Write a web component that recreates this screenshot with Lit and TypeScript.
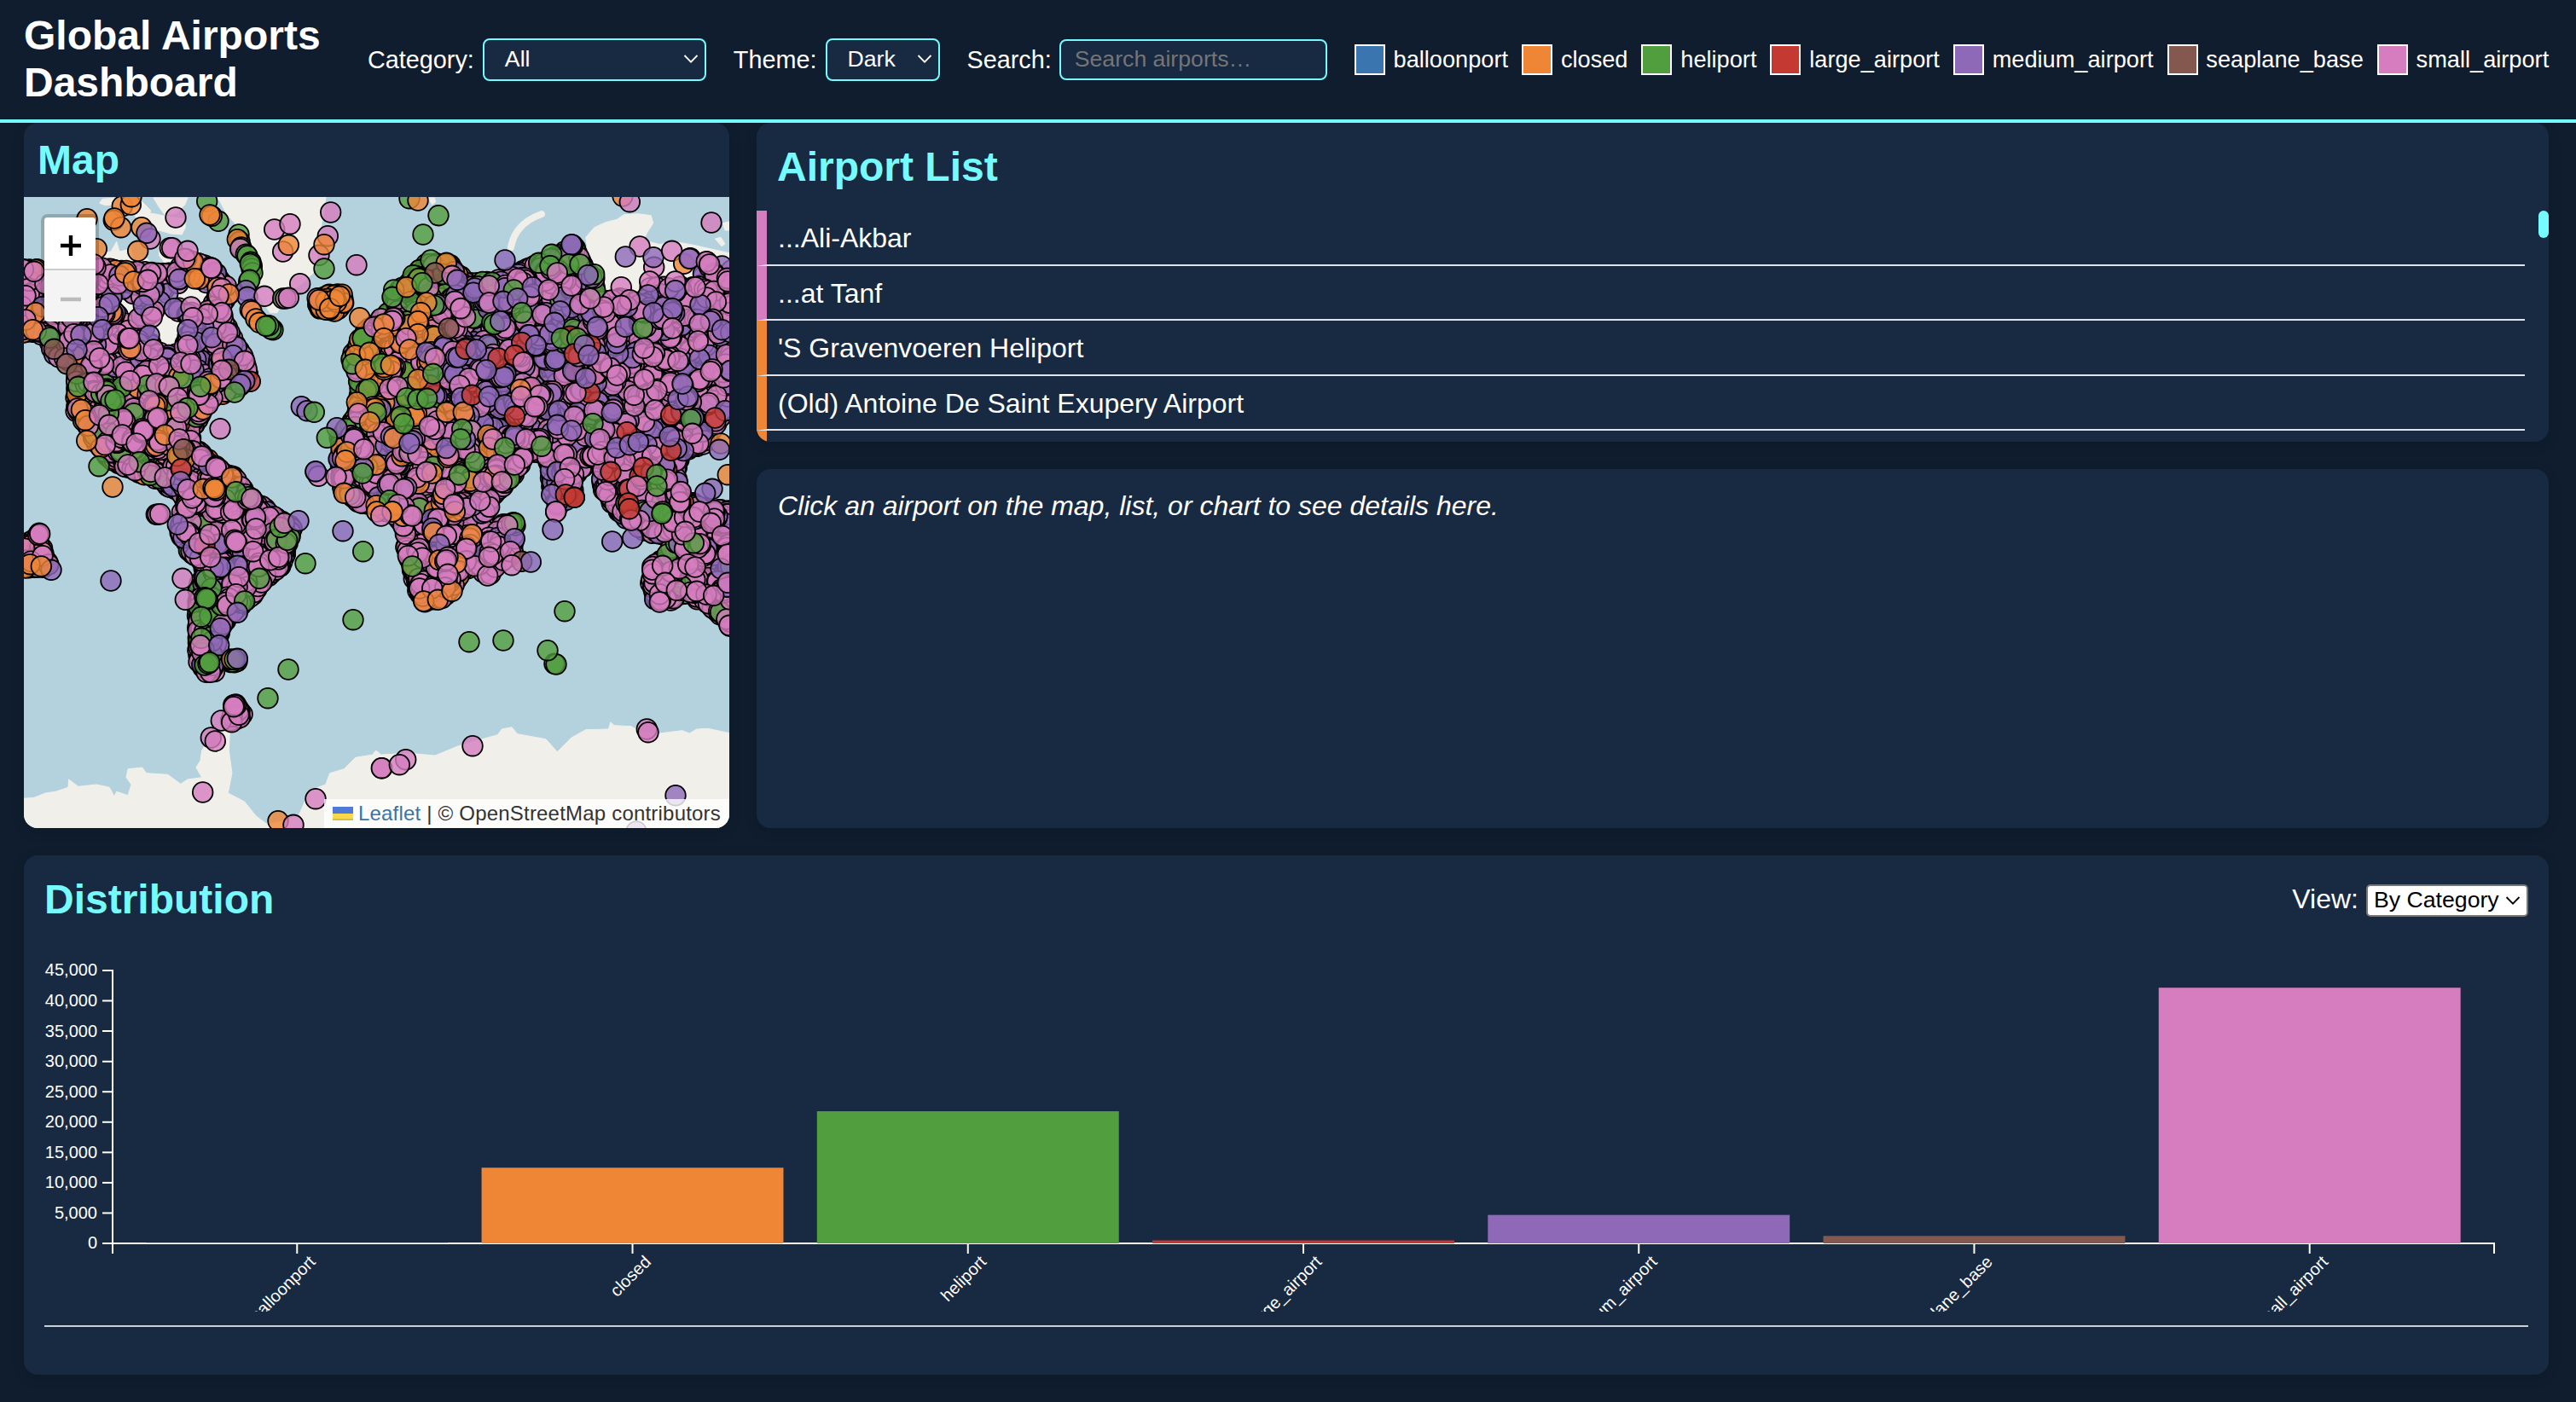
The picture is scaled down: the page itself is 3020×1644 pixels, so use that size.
import { LitElement, html, svg, css } from "lit";
import { customElement, property } from "lit/decorators.js";

type Kind = "u" | "o" | "g" | "r" | "v" | "b" | "p";

const COLORS: Record<Kind, string> = {
  u: "#3b75af",
  o: "#ef8636",
  g: "#519e3e",
  r: "#c43a32",
  v: "#8d69b8",
  b: "#84584e",
  p: "#d57dbe",
};

const CATEGORIES: { name: string; kind: Kind; count: number }[] = [
  { name: "balloonport", kind: "u", count: 50 },
  { name: "closed", kind: "o", count: 12480 },
  { name: "heliport", kind: "g", count: 21790 },
  { name: "large_airport", kind: "r", count: 490 },
  { name: "medium_airport", kind: "v", count: 4690 },
  { name: "seaplane_base", kind: "b", count: 1230 },
  { name: "small_airport", kind: "p", count: 42160 },
];

const AIRPORTS: { name: string; kind: Kind }[] = [
  { name: "...Ali-Akbar", kind: "p" },
  { name: "...at Tanf", kind: "p" },
  { name: "'S Gravenvoeren Heliport", kind: "o" },
  { name: "(Old) Antoine De Saint Exupery Airport", kind: "o" },
  { name: "", kind: "o" },
];

/* ---------- map data: four quadrants, three units per pixel ---------- */

type Point = [number, number];
type Marker = { x: number; y: number; k: Kind };

const NW: Point = [20, 220];
const NE: Point = [440, 220];
const SW: Point = [20, 590];
const SE: Point = [440, 590];

const points = (origin: Point, list: string): Point[] =>
  list
    .trim()
    .split(/\s+/)
    .map((pair) => {
      const [x, y] = pair.split(",").map(Number);
      return [origin[0] + x / 3, origin[1] + y / 3] as Point;
    });

const toPath = (ring: Point[]) => "M" + ring.map((p) => p[0].toFixed(1) + " " + p[1].toFixed(1)).join("L") + "Z";

const LAND: string[] = [
  toPath(points(NW, "690,20 1088,20 1075,110 1060,180 1052,290 1000,340 950,370 915,440 890,440 850,380 820,300 790,200 770,130 735,90 715,50")),
  toPath(points(NW, "590,110 592,140 580,165 540,162 500,150 470,170 450,120 470,90 520,100")),
  toPath(points(NW, "300,40 350,36 340,60 310,62 290,55")),
  toPath(points(NW, "480,36 600,36 590,60 560,90 520,96 500,70")),
  toPath(points(NW, "400,60 440,50 470,80 460,120 420,110")),
  toPath(points(NW, "290,235 330,225 350,190 360,225 400,215 410,260 460,250 470,285 400,290 380,270 290,270")),
  toPath(points(NW, "500,200 560,210 640,220 640,300 540,290 500,240")),
  toPath(points(NW, "620,400 655,370 665,420 630,430")),
  toPath(points(NW, "24,300 740,330 760,560 800,640 600,760 120,600 24,500")),
  toPath(points(NE, "740,175 770,140 810,122 850,112 875,95 925,92 970,98 977,125 955,160 945,185 1000,200 1050,190 1110,200 1245,230 1245,700 760,700 760,300")),
  toPath(points(NE, "1195,180 1215,175 1230,198 1218,206")),
  toPath(points(NE, "1222,125 1245,120 1245,150 1230,150")),
  toPath(points(NE, "185,36 208,36 212,50 200,60")),
  toPath(
    points(
      SW,
      "10,1040 60,1036 100,1020 135,1015 180,1000 182,972 215,997 280,990 325,1000 342,1032 350,1015 390,1028 402,990 384,965 390,935 440,930 455,950 530,955 575,988 600,972 650,965 630,930 645,905 650,870 665,845 690,870 720,800 748,810 745,870 756,950 742,1020 800,1050 840,1100 880,1130 930,1120 990,1100 1030,1010 1085,990 1100,950 1150,935 1190,895 1250,885 1262,870 1280,885 1380,880 1470,888 1550,855 1600,840 1690,815 1705,795 1740,788 1760,812 1860,830 1900,875 1950,825 2000,797 2080,795 2088,770 2100,782 2160,785 2200,808 2260,810 2340,800 2365,810 2390,795 2430,793 2520,812 2520,1160 10,1160",
    ),
  ),
];

type Region = { ring: Point[]; mix: string; gap?: number; clump?: number; holes?: [number, number, number][] };

const REGIONS: Region[] = [
  {
    ring: points(NW, "20,290 70,290 120,340 280,280 380,295 470,300 560,300 600,250 680,285 735,345 745,375 710,430 745,510 795,600 815,655 780,700 720,725 640,640 250,625 130,590 110,520 60,505 20,510"),
    mix: "pppppppppvvvvvpo",
    gap: 75,
    clump: 2,
    holes: [
      [198, 384, 25],
      [226, 344, 20],
      [150, 364, 15],
    ],
  },
  { ring: points(NW, "208,665 400,645 560,660 680,690 695,730 635,800 610,850 600,950 420,930 290,890 248,840 212,780"), mix: "pppppppgooggp", clump: 4 },
  { ring: points(NW, "265,880 420,880 640,930 700,990 760,1020 830,1110 610,1120 570,1065 490,1020 430,1000 335,960"), mix: "pppppvogp", clump: 3 },
  { ring: points(NW, "1060,390 1100,375 1145,380 1150,410 1110,435 1065,425"), mix: "oooop", clump: 3 },
  {
    ring: points(SW, "600,0 800,-30 870,20 920,60 965,85 950,130 930,190 920,225 855,280 830,320 795,350 730,410 705,480 690,540 690,590 665,592 640,560 640,490 636,370 655,300 662,215 615,175 575,100 580,60"),
    mix: "pppppppppvvg",
    clump: 3,
  },
  { ring: points(SW, "640,300 665,250 690,320 680,430 685,540 690,575 665,570 640,500"), mix: "ggggggpv", clump: 3 },
  { ring: points(SW, "900,50 965,90 945,150 925,225 860,260 850,220 900,160"), mix: "gggpp", clump: 3 },
  { ring: points(SW, "20,150 60,130 90,170 110,220 60,225 20,230"), mix: "pvpo", clump: 2 },
  { ring: points(SW, "750,552 770,560 755,562"), mix: "vog" },
  { ring: points(SW, "765,710 790,740 780,755 755,765"), mix: "p" },
  { ring: points(NE, "-40,510 0,480 50,440 120,420 230,420 240,560 160,640 100,700 -50,690 -80,600"), mix: "oooogpppg", clump: 3 },
  { ring: points(NE, "65,395 85,360 125,335 160,290 190,265 260,275 300,315 320,420 200,440 80,430"), mix: "gggoopppv", clump: 3 },
  { ring: points(NE, "310,340 460,325 540,285 620,250 700,210 735,290 770,320 770,480 640,560 320,560 240,430"), mix: "vvvvpppgp", clump: 2 },
  { ring: points(NE, "160,560 640,550 780,480 780,960 560,930 330,800 160,760"), mix: "vvvvpppvprp", clump: 2 },
  {
    ring: points(NE, "760,400 860,390 930,410 1060,390 1150,340 1180,390 1250,400 1250,760 1200,830 1150,900 1060,940 780,960"),
    mix: "pppppvvvvpp",
    gap: 60,
    clump: 2,
  },
  { ring: points(NE, "1170,265 1250,290 1250,420 1200,400 1160,350 950,390 965,350 1130,345"), mix: "ppvp", gap: 170 },
  { ring: points(NE, "800,930 1070,940 1050,1000 1080,1110 1160,1130 1240,1140 1240,1180 1000,1210 920,1170 850,1130 800,1050"), mix: "vvppprpg", clump: 3 },
  { ring: points(NE, "605,950 760,950 700,1010 690,1080 640,1120 627,1060"), mix: "vvppp", clump: 3 },
  { ring: points(NE, "-50,690 100,690 300,790 320,900 -110,1000 -125,880 -60,800"), mix: "googppv", clump: 3 },
  { ring: points(NE, "-125,950 -80,880 100,850 330,800 540,900 510,970 465,1030 400,1100 200,1140 100,1160 0,1120 -60,1110 -110,1060"), mix: "pppppgov", clump: 3 },
  { ring: points(SE, "50,20 180,0 400,10 370,80 400,120 400,190 350,220 300,235 275,290 230,335 170,345 145,290 130,220 112,150 110,90"), mix: "ppppppovp", clump: 3 },
  { ring: points(SE, "450,70 485,75 480,180 430,215 400,248 375,240 360,190"), mix: "ppppv", clump: 3 },
  { ring: points(SE, "975,220 1010,200 1070,120 1130,40 1250,30 1250,430 1215,390 1165,350 1110,310 1040,335 985,340 972,280"), mix: "ppppppppppvg", clump: 3 },
  { ring: points(SE, "850,0 1120,0 1060,90 1000,110 940,90 885,50"), mix: "ppppv", clump: 3 },
];

const CLUSTERS: [Point, string][] = [
  [
    NW,
    `246,110o 280,215o 370,65o 400,60o 402,32o 340,115o 365,140o 342,108o 558,105p 438,140o 468,180p 456,160v 425,223o 538,212p 545,212p 590,250p 600,223p
     668,48g 708,118g 685,100o 678,96o 1103,87p 905,147p 960,128p 935,225p 955,202o 1093,170p 1062,238p 1080,200o 1080,285g 1194,272p 995,338p
     780,165g 783,190b 775,182o 788,210g 785,215p 805,235g 810,240g 822,262g 826,275g 825,285g 828,300g 820,268g 815,330g 818,325g 805,362v 810,385v 870,382p 935,390g 945,390p 955,388p
     820,430p 825,435o 840,462o 852,475o 900,500g 893,497g 885,485g 875,487g 1062,395o 1100,425o 1135,382o 1205,458o
     60,295p 30,380p 65,440o 30,465p 55,500o 285,340p 270,270p 360,310v 355,338p 380,300o 410,330o 470,300p 460,325p 570,322v 640,322o 625,320o 685,283p 683,283p 720,355p 745,375o 708,380p 720,440p 300,420p 325,408v 285,455v 445,415v 475,455p 553,425v 612,420p 670,445p 618,458p
     225,518v 300,500v 355,515p 390,530p 395,530p 465,520v 600,500v 685,527v 740,510p 600,555p 480,570p 270,575p 290,600p 210,570v 720,600p 760,590v 575,615p 612,620p 800,610p 745,640b 720,643p
     820,682r 800,680v 786,692v 765,720g 115,528g 130,568b 175,620b 210,655b 215,700g 270,685p
     397,680p 490,690p 535,700p 565,740p 465,750p 330,750g 345,747g 240,818o 290,800p 323,835p 370,870p 440,848p 438,862p 446,858p 440,855p 445,855p 420,900p 640,730p 680,690o 645,700g 600,775g 575,790p 495,810p 520,870o 570,885p 585,920b 310,905p 245,890o 288,980g 336,1053o 430,965g 390,975p 470,1000p 520,1020p 577,990r 650,945p 714,848p 575,1035v 700,980p 710,990p 700,985p 755,1020o 600,1062p 655,1060o 700,1065o 690,1055o 695,1060o 770,1070g 825,1095p
     1000,770v 1020,785v 1045,790g 1125,845v 1050,1000v 1060,1015p 1050,998v 1090,880g 1195,755o 1200,795p 1240,825o 1185,885p 1160,930o 1155,960o 1220,920p 1215,1005g 1122,1018p 1150,1075o 1190,1090p
     1215,530g 1255,490p 1190,590o 1240,580o 1180,620g 1225,640o`,
  ],
  [
    NE,
    `120,38g 150,45o 222,98g 168,165g 870,30o 895,50p 1182,123p 695,203g 692,201v 690,200v 456,255v 575,265g 620,235g 615,275g 680,270g 720,270g 770,305g 748,308v 930,207p 880,243v 980,280p 978,245v 1043,223p 1085,268o 1108,248p 1105,250v 965,330p 865,350p 960,378v 1055,330p 1055,362v 1165,260p 1175,270p 1125,350p 895,395p 865,415p
     195,255g 250,265o 210,300b 270,310p 288,325v 65,360g 60,385g 110,350o 165,335g 180,405o 160,440o 150,470o 280,400p 300,425p 400,345p 400,405p 500,320p 487,360g 553,350v 450,400v 500,390v 660,385v 650,435v 630,475v 515,440g 440,470v 640,300p 610,360p 690,345p 720,410p 803,420p 755,390p
     30,480o 30,530o 150,515o 108,530p 120,570o 20,620g 55,625o 258,495b 180,580v 210,600p 318,568r 355,570v 470,570p 432,600r 390,642v 515,545r 565,555v 490,590r 520,615p 655,530g 710,530g 700,585r 735,555v 750,590v 780,490v 850,525p 880,490v 940,495g 978,440v 1045,425v 1045,495p 1140,480p 1220,500v 1240,330p 1135,540p 1065,610p 945,565p 850,660p 910,730p 945,675p
     150,675o 203,655g 78,700p 110,740g 150,745g 182,742g 90,805g 100,830g 250,790o 310,790o 305,850g 300,885g 210,850p 190,840p 340,730r 400,735v 455,765v 510,710o 513,735p 570,770p 560,770p 645,785v 700,805p 755,722r 705,722p 740,670v 490,805r 640,835v 765,830g 690,855v 790,885p 530,885p 585,910g 400,915o 413,885p 455,915g 885,860r 850,915v 895,905v 925,895v 1040,800r 1065,745v 1100,735v 1080,690v 1195,810r 1110,815g 1115,865p 1040,925r 1035,875v 1215,900o 1210,922v 1240,1010o
     350,965g 150,940p 120,900v 430,975p 490,975p 200,1005o 180,1000p 295,1010g 380,1035p 445,1035p 110,1055v 100,1060p 50,1100g 80,1115p 60,1140o 275,1110p 245,1060p 640,1000v 685,985p 665,1025p 620,1080v 700,1090r 670,1080r 828,1000r 943,985r 990,1010g 990,1050g 920,1050p 1075,1070p 890,1110r 1010,1140g 1185,1060v 1160,1075v 635,1140p`,
  ],
  [
    SW,
    `490,40p 495,40p 503,38p 78,106p 74,112p 80,108p 90,185p 45,215o 120,235v 85,222o 330,273v 582,265p 592,340p 565,75v 620,160v 660,150r 640,140p 678,110p 755,95p 765,130p 772,138p 770,135p 840,90p 830,170p 775,220v 715,225v 680,190p 780,260p 890,200p 920,190p 852,265g 950,130g 925,85g 940,70p 990,62v 1146,98v 1217,170g 1014,212g 1182,410g 954,585g 882,686g
     665,270g 660,332g 670,338g 665,335g 648,400g 648,475g 645,500p 740,360p 770,320p 800,345g 775,385v 715,440v 710,500v 680,595p 660,570g 672,565g 677,560g 755,550o 765,550g 775,547v 718,765p 755,770p 780,745p 770,712p 765,710p 762,716p 682,825p 697,837p 653,1017p 1050,1040p 1283,932p 918,1118o 972,1132p 1265,30o`,
  ],
  [
    SE,
    `60,30o 130,45p 20,45p 280,30o 275,5p 340,110o 250,115p 225,145v 320,160p 115,185p 130,222g 225,200o 285,210o 255,190p 245,205p 250,200p 155,300p 200,300p 170,345o 220,340o 270,310o 255,250p 395,255p 415,180p 407,135p 485,68g 492,78g 480,72g 490,70g 465,78p 490,125v 475,170p 515,205b 547,207v 480,218p 400,190p 635,30p 624,93v 833,135v 905,123v 900,60p 700,-20r 893,20r 1008,37g
     1120,50p 1140,30p 1180,70p 1220,115p 1120,140g 1090,100p 1010,220p 1100,215p 1125,225p 1215,230v 1000,320p 1020,280p 1060,307p 1130,310p 1190,325p 1240,280p 1240,180p 1245,430p 1000,348p 666,380g 330,488g 450,483g 630,565g 636,567g 606,518g 107,902p 22,932p 85,920p 342,854p 955,795p 960,806p 1056,1028v 918,1155v`,
  ],
];

function random(seed: number) {
  return () => {
    seed = (seed + 0x6d2b79f5) | 0;
    let t = Math.imul(seed ^ (seed >>> 15), 1 | seed);
    t = (t + Math.imul(t ^ (t >>> 7), 61 | t)) ^ t;
    return ((t ^ (t >>> 14)) >>> 0) / 4294967296;
  };
}

function inside(x: number, y: number, ring: Point[]) {
  let hit = false;
  for (let i = 0, j = ring.length - 1; i < ring.length; j = i++) {
    const [xi, yi] = ring[i];
    const [xj, yj] = ring[j];
    if (yi > y !== yj > y && x < ((xj - xi) * (y - yi)) / (yj - yi) + xi) hit = !hit;
  }
  return hit;
}

/* Each returned group is a tight stack of markers that is drawn together. */
function scatter(region: Region, next: () => number): Marker[][] {
  const { ring, mix, gap = 46, clump = 1, holes = [] } = region;
  const xs = ring.map((p) => p[0]);
  const ys = ring.map((p) => p[1]);
  const x0 = Math.min(...xs);
  const y0 = Math.min(...ys);
  const w = Math.max(...xs) - x0;
  const h = Math.max(...ys) - y0;
  const out: Marker[][] = [];
  const add = (x: number, y: number, size: number) => {
    if (holes.some(([hx, hy, r]) => Math.hypot(hx - x, hy - y) < r)) return;
    const stack: Marker[] = [];
    const count = 1 + Math.floor(next() * size);
    for (let i = 0; i < count; i++) {
      stack.push({
        x: x + (i ? (next() - 0.5) * 8 : 0),
        y: y + (i ? (next() - 0.5) * 8 : 0),
        k: mix[Math.floor(next() * mix.length)] as Kind,
      });
    }
    out.push(stack);
  };
  for (let n = (w * h) / gap; n > 0; n--) {
    const x = x0 + next() * w;
    const y = y0 + next() * h;
    if (inside(x, y, ring)) add(x, y, clump);
  }
  ring.forEach(([ax, ay], i) => {
    const [bx, by] = ring[(i + 1) % ring.length];
    const steps = Math.hypot(bx - ax, by - ay) / (gap / 10);
    for (let s = 0; s < steps; s++) {
      const t = s / steps;
      add(ax + (bx - ax) * t + (next() - 0.5) * 3, ay + (by - ay) * t + (next() - 0.5) * 3, 1);
    }
  });
  return out;
}

function buildMarkers(): Marker[] {
  const next = random(11);
  const dense = REGIONS.flatMap((region) => scatter(region, next));
  for (let i = dense.length - 1; i > 0; i--) {
    const j = Math.floor(next() * (i + 1));
    [dense[i], dense[j]] = [dense[j], dense[i]];
  }
  const placed = CLUSTERS.flatMap(([origin, list]) =>
    list
      .trim()
      .split(/\s+/)
      .map((item) => {
        const [[x, y]] = points(origin, item.slice(0, -1));
        return { x, y, k: item.slice(-1) as Kind };
      }),
  );
  return [...dense.flat(), ...placed];
}

const MARKERS = buildMarkers();

const chevron = html`<svg class="chevron" viewBox="0 0 18 10" width="18" height="10">
  <path d="M1.5 1L9 8.6L16.5 1" fill="none" stroke="currentColor" stroke-width="1.8" />
</svg>`;

@customElement("world-map")
class WorldMap extends LitElement {
  static styles = css`
    :host {
      display: block;
      position: relative;
      overflow: hidden;
      background: #b3d2dd;
    }
    .canvas {
      display: block;
      width: 100%;
      height: 100%;
    }
    .zoom {
      position: absolute;
      left: 20px;
      top: 20px;
      border: 4px solid rgba(0, 0, 0, 0.2);
      border-radius: 8px;
      background-clip: padding-box;
      overflow: hidden;
    }
    .btn {
      display: grid;
      place-items: center;
      box-sizing: border-box;
      width: 60px;
      height: 60px;
      padding: 8px 0 0 1px;
      background: #fff;
      color: #000;
    }
    .btn.in {
      height: 62px;
      padding-top: 6px;
      border-bottom: 2px solid #ccc;
    }
    .btn.out {
      background: #f4f4f4;
      color: #bbb;
    }
    .credit {
      position: absolute;
      right: 0;
      bottom: 0;
      display: flex;
      align-items: center;
      height: 34px;
      padding: 0 10px;
      box-sizing: border-box;
      background: rgba(255, 255, 255, 0.8);
      font-size: 24px;
      line-height: 34px;
      letter-spacing: 0.2px;
      color: #333;
      white-space: pre;
    }
    .flag {
      margin-right: 6px;
    }
    .link {
      color: #3676a4;
    }
  `;

  render() {
    return html`
      <svg class="canvas" viewBox="28 231 827 740" preserveAspectRatio="none">
        <g fill="#f1efea" stroke="#f1efea" stroke-width="1" stroke-linejoin="round">
          ${LAND.map((d) => svg`<path d=${d} />`)}
          <path d="M599 290Q604 262 635 251" fill="none" stroke-width="8" stroke-linecap="round" />
        </g>
        <g stroke="#000" stroke-width="1.8" fill-opacity="0.8">
          ${MARKERS.map((m) => svg`<circle cx=${m.x.toFixed(1)} cy=${m.y.toFixed(1)} r="11.8" fill=${COLORS[m.k]} />`)}
        </g>
      </svg>
      <div class="zoom">
        <div class="btn in">
          <svg width="26" height="26" viewBox="0 0 26 26"><path d="M13 1V25M1 13H25" stroke="currentColor" stroke-width="4.4" /></svg>
        </div>
        <div class="btn out">
          <svg width="26" height="26" viewBox="0 0 26 26"><path d="M1 13H25" stroke="currentColor" stroke-width="4.4" /></svg>
        </div>
      </div>
      <div class="credit"><svg class="flag" width="24" height="16" viewBox="0 0 12 8"><path fill="#5079d8" d="M0 0h12v4H0z" /><path fill="#f9d849" d="M0 4h12v3H0z" /><path fill="#dbbd3c" d="M0 7h12v1H0z" /></svg><span class="link">Leaflet</span> | © OpenStreetMap contributors</div>
    `;
  }
}

@customElement("bar-chart")
class BarChart extends LitElement {
  static styles = css`
    :host {
      display: block;
    }
    .chart {
      display: block;
      overflow: hidden;
    }
    .label {
      fill: #fff;
      font: 20px "Liberation Sans", Arial, sans-serif;
      text-anchor: end;
    }
    .axis {
      fill: none;
      stroke: #fff;
      stroke-width: 2;
    }
  `;

  render() {
    const width = 2912;
    const height = 440;
    const left = 80;
    const right = width - 40;
    const top = 40;
    const base = 360;
    const max = 45000;
    const step = (right - left) / 7.1;
    const y = (v: number) => base - (v / max) * (base - top);
    const ticks = Array.from({ length: 10 }, (_, i) => i * 5000);
    const center = (i: number) => left + step * (0.55 + i);
    return html`
      <svg class="chart" width=${width} height=${height} viewBox="0 0 ${width} ${height}">
        <path class="axis" d="M${left} ${base + 12}V${base}H${right}V${base + 12}" />
        ${CATEGORIES.map(
          (c, i) => svg`
            <path class="axis" d="M${center(i)} ${base}v12" />
            <text class="label" transform="translate(${center(i)} ${base}) rotate(-45)" x="0" y="18" dy="0.71em">${c.name}</text>`,
        )}
        <path class="axis" d="M${left - 12} ${top}H${left}V${base}h-12" />
        ${ticks.map(
          (t) => svg`
            <path class="axis" d="M${left - 12} ${y(t)}h12" />
            <text class="label" x=${left - 18} y=${y(t)} dy="0.32em">${t.toLocaleString("en-US")}</text>`,
        )}
        ${CATEGORIES.map(
          (c, i) => svg`<rect x=${center(i) - step * 0.45} y=${y(c.count)} width=${step * 0.9} height=${base - y(c.count)} fill=${COLORS[c.kind]} />`,
        )}
      </svg>
    `;
  }
}

@customElement("select-box")
class SelectBox extends LitElement {
  @property() value = "";

  static styles = css`
    :host {
      display: flex;
      align-items: center;
      justify-content: space-between;
      box-sizing: border-box;
      font-size: 26.67px;
      white-space: nowrap;
    }
    .chevron {
      display: block;
      flex: none;
    }
  `;

  render() {
    return html`<span>${this.value}</span>${chevron}`;
  }
}

@customElement("app-root")
class AppRoot extends LitElement {
  static styles = css`
    :host {
      display: flex;
      flex-direction: column;
      box-sizing: border-box;
      width: 3020px;
      height: 1644px;
      overflow: hidden;
      background: #0f1d2e;
      color: #fff;
      font-family: "Liberation Sans", Arial, Helvetica, sans-serif;
      font-size: 32px;
    }
    h1,
    h2,
    ul,
    p {
      margin: 0;
      padding: 0;
    }
    .header {
      position: relative;
      z-index: 1;
      display: flex;
      align-items: center;
      gap: 32px;
      height: 144px;
      flex: none;
      box-sizing: border-box;
      padding-left: 28px;
      border-bottom: 4px solid #75fbfd;
      background: #0f1d2e;
    }
    .title {
      flex: 0 0 371px;
      padding-bottom: 2px;
      font-size: 48px;
      line-height: 55px;
    }
    .field {
      display: flex;
      align-items: center;
      gap: 10px;
      font-size: 28.8px;
      white-space: nowrap;
    }
    .control {
      box-sizing: border-box;
      border: 2px solid #75fbfd;
      border-radius: 8px;
      background: #182942;
      color: #fff;
      height: 50px;
    }
    .category {
      width: 262px;
      padding: 0 7px 2px 24px;
    }
    .theme {
      width: 134px;
      padding: 0 7px 2px 24px;
    }
    .search {
      width: 314px;
      height: 48px;
      margin: 0 0 0 -1px;
      padding: 0 16px 1px;
      font: 26.67px "Liberation Sans", Arial, sans-serif;
      outline: none;
    }
    .search::placeholder {
      color: #757575;
      opacity: 1;
    }
    .legend {
      display: flex;
      align-items: center;
      gap: 16px;
      font-size: 27.2px;
      white-space: nowrap;
    }
    .entry {
      display: flex;
      align-items: center;
      gap: 9.8px;
    }
    .swatch {
      box-sizing: border-box;
      width: 36px;
      height: 36px;
      border: 2px solid #fff;
    }
    .main {
      display: grid;
      grid-template-columns: 827px 2101px;
      grid-template-rows: 374px 421px 609px;
      gap: 32px;
      padding-left: 28px;
    }
    .panel {
      box-sizing: border-box;
      border-radius: 16px;
      background: #182942;
      box-shadow: 0 4px 16px rgba(0, 0, 0, 0.12);
      overflow: hidden;
    }
    .heading {
      font-size: 48px;
      line-height: 55px;
      color: #75fbfd;
    }
    .map-panel {
      grid-row: 1 / 3;
      display: flex;
      flex-direction: column;
    }
    .map-panel .heading {
      padding: 16px;
    }
    .map {
      flex: 1;
    }
    .list-panel {
      display: flex;
      flex-direction: column;
    }
    .list-panel .heading {
      padding: 24px;
    }
    .scroller {
      display: flex;
      justify-content: space-between;
      flex: 1;
      min-height: 0;
    }
    .list {
      list-style: none;
      width: 2073px;
    }
    .row {
      box-sizing: border-box;
      height: 64.6px;
      padding: 1px 0 0 13px;
      border-left: 12px solid;
      border-bottom: 2px solid #dfe3ea;
      line-height: 62px;
    }
    .thumb {
      width: 12px;
      height: 32px;
      border-radius: 6px;
      background: #75fbfd;
    }
    .detail {
      padding: 25px;
      font-style: italic;
      line-height: 37px;
    }
    .distribution {
      grid-column: 1 / 3;
      padding: 24px;
    }
    .bar {
      display: flex;
      align-items: center;
      justify-content: space-between;
      margin-bottom: 16px;
    }
    .view {
      display: flex;
      align-items: center;
      gap: 9px;
    }
    .view-select {
      width: 190px;
      height: 38px;
      margin-top: 2px;
      padding: 0 7px 0 7px;
      border: 2px solid #767676;
      border-radius: 5px;
      background: #fff;
      color: #000;
    }
    .rule {
      height: 2px;
      margin-top: 16px;
      background: #cccfd3;
    }
  `;

  render() {
    return html`
      <header class="header">
        <h1 class="title">Global Airports<br />Dashboard</h1>
        <div class="field">Category:<select-box class="control category" value="All"></select-box></div>
        <div class="field">Theme:<select-box class="control theme" value="Dark"></select-box></div>
        <div class="field">Search:<input class="control search" placeholder="Search airports…" /></div>
        <div class="legend">
          ${CATEGORIES.map(
            (c) => html`<div class="entry"><span class="swatch" style="background:${COLORS[c.kind]}"></span>${c.name}</div>`,
          )}
        </div>
      </header>
      <main class="main">
        <section class="panel map-panel">
          <h2 class="heading">Map</h2>
          <world-map class="map"></world-map>
        </section>
        <section class="panel list-panel">
          <h2 class="heading">Airport List</h2>
          <div class="scroller">
            <ul class="list">
              ${AIRPORTS.map((a) => html`<li class="row" style="border-left-color:${COLORS[a.kind]}">${a.name}</li>`)}
            </ul>
            <div class="thumb"></div>
          </div>
        </section>
        <section class="panel detail"><p>Click an airport on the map, list, or chart to see details here.</p></section>
        <section class="panel distribution">
          <div class="bar">
            <h2 class="heading">Distribution</h2>
            <div class="view">View:<select-box class="view-select" value="By Category"></select-box></div>
          </div>
          <bar-chart></bar-chart>
          <div class="rule"></div>
        </section>
      </main>
    `;
  }
}
